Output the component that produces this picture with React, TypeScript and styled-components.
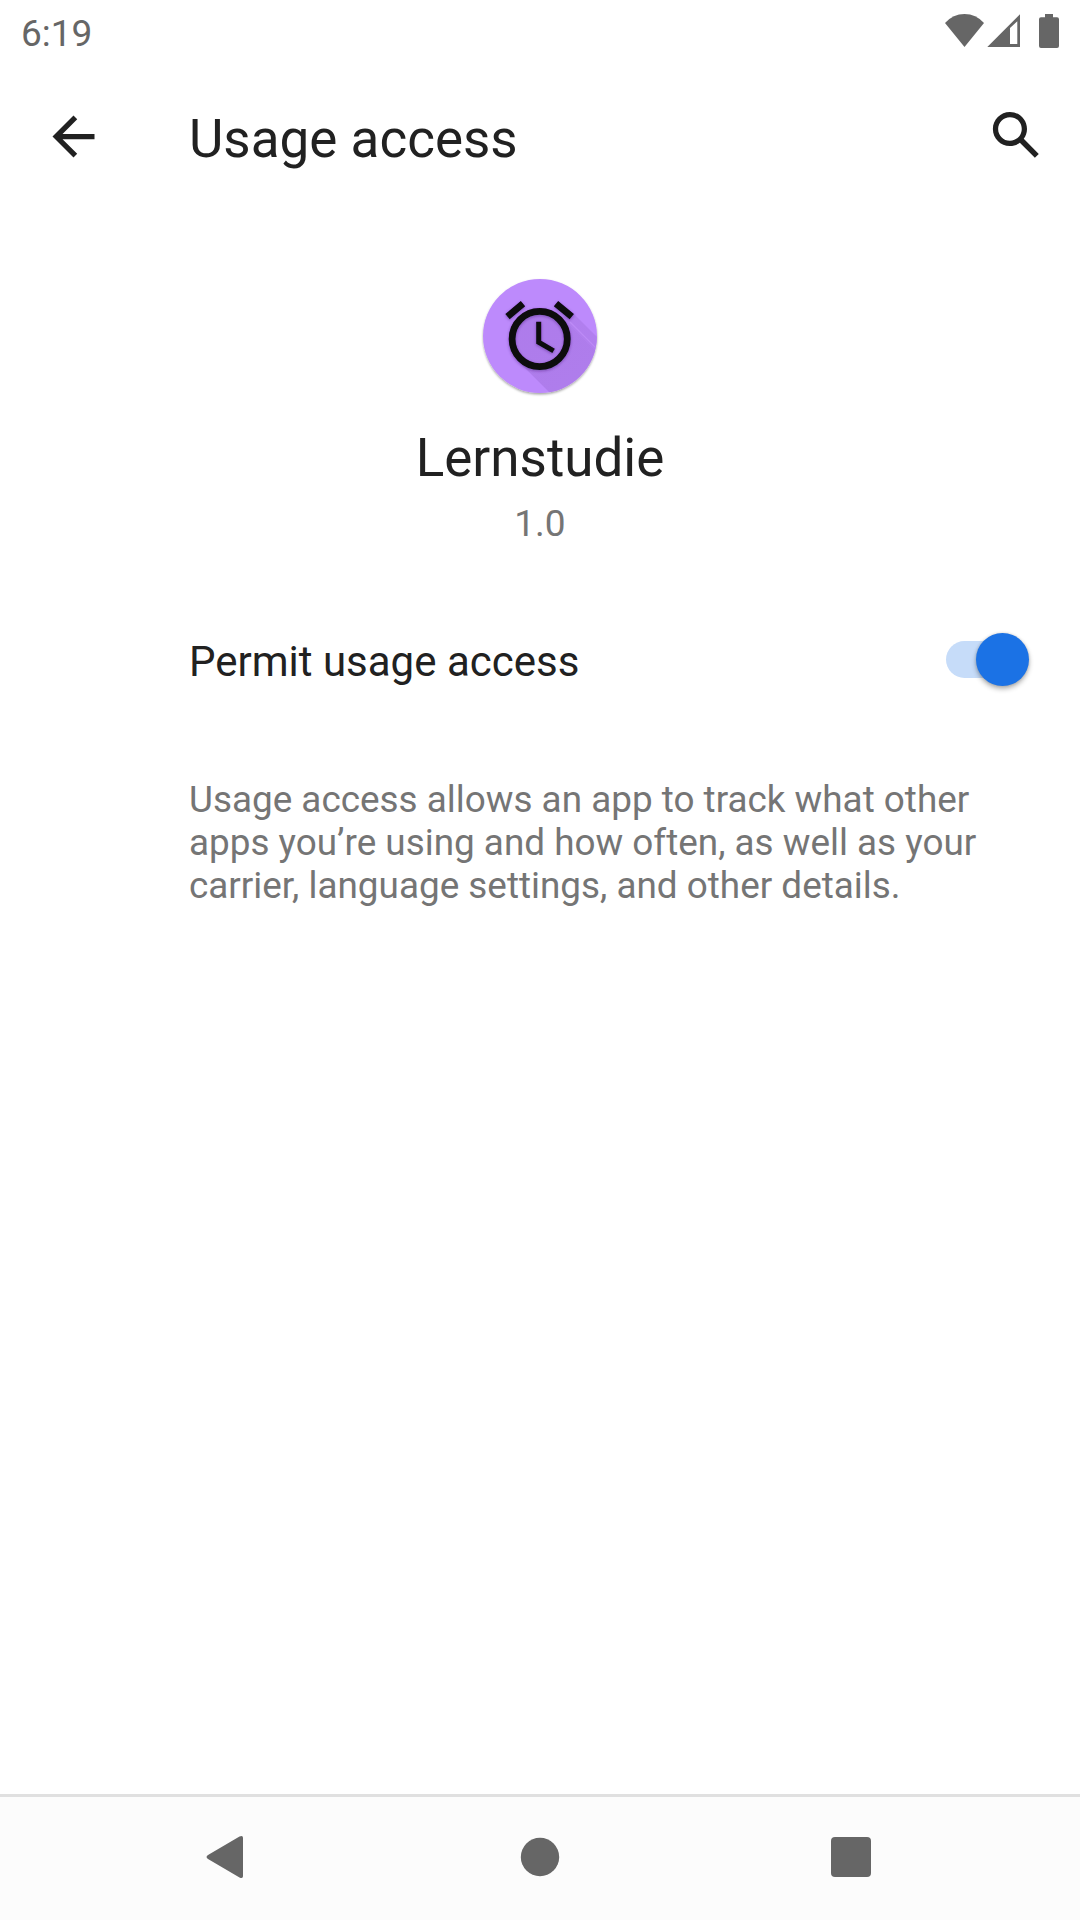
import React from "react";
import styled, { createGlobalStyle } from "styled-components";

const GlobalStyle = createGlobalStyle`
  *, *::before, *::after { box-sizing: border-box; }
  body { margin: 0; background: #ffffff; }
  svg { display: block; flex: none; }
`;

const Screen = styled.div`
  display: flex;
  flex-direction: column;
  width: 1080px;
  height: 1920px;
  background: #ffffff;
  color: #212121;
  font-family: Roboto, "Noto Sans", sans-serif;
  font-weight: 400;
  overflow: hidden;
`;

const StatusBar = styled.header`
  display: flex;
  align-items: center;
  justify-content: space-between;
  height: 62px;
  margin-bottom: 1px;
  padding: 0 18px 0 21px;
`;

const Clock = styled.span`
  margin-top: 5px;
  font-size: 37px;
  line-height: 43px;
  color: #666666;
`;

const AppBar = styled.div`
  display: flex;
  align-items: center;
  height: 147px;
  padding: 0 32px 0 42px;
`;

const IconButton = styled.button<{ $lift?: number }>`
  display: flex;
  width: 63px;
  height: 63px;
  margin-bottom: ${({ $lift = 0 }) => $lift * 2}px;
  padding: 0;
  border: 0;
  background: none;
  color: #212121;
`;

const Title = styled.h1`
  flex: 1;
  margin: 4px 0 0 84px;
  font-size: 53px;
  font-weight: 400;
  line-height: 62px;
`;

const Content = styled.main`
  flex: 1;
  display: flex;
  flex-direction: column;
`;

const EntityHeader = styled.section`
  display: flex;
  flex-direction: column;
  align-items: center;
  padding-top: 63px;
`;

const AppName = styled.h2`
  margin: 28px 0 0;
  font-size: 53px;
  font-weight: 400;
  line-height: 62px;
`;

const Version = styled.span`
  margin-top: 13px;
  font-size: 37px;
  line-height: 43px;
  color: #757575;
`;

const PreferenceRow = styled.div`
  display: flex;
  align-items: center;
  justify-content: space-between;
  height: 147px;
  margin-top: 41px;
  padding: 0 51px 0 189px;
`;

const PreferenceTitle = styled.span`
  margin-top: 4px;
  font-size: 42px;
  line-height: 50px;
`;

const SwitchTrack = styled.button`
  display: flex;
  align-items: center;
  justify-content: flex-end;
  width: 75px;
  height: 37px;
  margin-right: 8px;
  padding: 0;
  border: 0;
  border-radius: 19px;
  background: #c6dcf9;
`;

const SwitchThumb = styled.span`
  flex: none;
  width: 53px;
  height: 53px;
  margin-right: -8px;
  border-radius: 50%;
  background: #1b72e5;
  box-shadow: 0 3px 5px rgba(0, 0, 0, 0.3), 0 0 3px rgba(0, 0, 0, 0.15);
`;

const Description = styled.p`
  width: 812px;
  margin: 45px 0 0 189px;
  font-size: 36.87px;
  line-height: 43px;
  color: #757575;
`;

const NavigationBar = styled.nav`
  display: flex;
  justify-content: space-between;
  height: 126px;
  padding: 0 187px;
  border-top: 3px solid #e0e0e0;
  background: #fcfcfc;
`;

const NavButton = styled.button`
  display: flex;
  align-items: center;
  justify-content: center;
  width: 84px;
  height: 120px;
  padding: 0;
  border: 0;
  background: none;
`;

function StatusIcons() {
  return (
    <svg width="120" height="36" viewBox="942 13 120 36" fill="#666666">
      <path d="M964.5 47 L945 23 Q953 14 964.5 14 Q976 14 984 23 Z" />
      <path fillRule="evenodd" d="M987.3 47 L1020 14.3 V47 Z M1010 28 V44 H1017.3 V21.3 Z" />
      <path d="M1045 14h8v3.3h4q2 0 2 2V46q0 2-2 2h-16q-2 0-2-2V19.3q0-2 2-2h4z" />
    </svg>
  );
}

function BackIcon() {
  return (
    <svg width="63" height="63" viewBox="0 0 24 24" fill="currentColor">
      <path d="M20 11H7.83l5.59-5.59L12 4l-8 8 8 8 1.41-1.41L7.83 13H20v-2z" />
    </svg>
  );
}

function SearchIcon() {
  return (
    <svg width="63" height="63" viewBox="0 0 24 24" fill="currentColor">
      <path d="M20.49 19l-5.73-5.73C15.53 12.2 16 10.91 16 9.5 16 5.91 13.09 3 9.5 3S3 5.91 3 9.5 5.91 16 9.5 16c1.41 0 2.7-.47 3.77-1.24L19 20.49 20.49 19zM5 9.5C5 7.01 7.01 5 9.5 5S14 7.01 14 9.5 11.99 14 9.5 14 5 11.99 5 9.5z" />
    </svg>
  );
}

function AlarmAppIcon() {
  return (
    <svg width="126" height="126" viewBox="477 273 126 126">
      <defs>
        <clipPath id="disc"><circle cx="540" cy="336" r="57" /></clipPath>
        <linearGradient id="longShadow" x1="0" y1="0" x2="1" y2="1">
          <stop offset="0" stopColor="#9866d2" stopOpacity="0.4" />
          <stop offset="1" stopColor="#a878e4" stopOpacity="0.6" />
        </linearGradient>
        <filter id="discShadow" x="-20%" y="-20%" width="140%" height="140%">
          <feDropShadow dx="0" dy="1.5" stdDeviation="1.1" floodColor="#000" floodOpacity="0.36" />
        </filter>
        <filter id="glyphShadow" x="-20%" y="-20%" width="140%" height="140%">
          <feDropShadow dx="0" dy="1" stdDeviation="1.5" floodColor="#3b1d68" floodOpacity="0.45" />
        </filter>
      </defs>
      <circle cx="540" cy="336" r="57" fill="#bd8afc" filter="url(#discShadow)" />
      <g clipPath="url(#disc)">
        <path d="M518 361 A31 31 0 0 1 562 317 L640 395 L552 395 Z" fill="url(#longShadow)" />
        <path d="M562 317 L574 314 L630 370 L615 370 Z" fill="url(#longShadow)" opacity="0.8" />
        <path d="M570 322 L606 358" stroke="#bd8bf6" strokeWidth="1.2" />
      </g>
      <g fill="none" stroke="#080808" filter="url(#glyphShadow)">
        <circle cx="539.7" cy="339" r="27.6" strokeWidth="6.8" />
        <path d="M538.7 321.8 V342.2 L553.6 350.8" strokeWidth="5" />
        <path d="M507.5 316.7 L523 303.7 M556 303.7 L571.8 316.7" strokeWidth="6.8" />
      </g>
    </svg>
  );
}

export default function App() {
  return (
    <>
      <GlobalStyle />
      <Screen>
        <StatusBar>
          <Clock>6:19</Clock>
          <StatusIcons />
        </StatusBar>
        <AppBar>
          <IconButton aria-label="Navigate up"><BackIcon /></IconButton>
          <Title>Usage access</Title>
          <IconButton aria-label="Search" $lift={1}><SearchIcon /></IconButton>
        </AppBar>
        <Content>
          <EntityHeader>
            <AlarmAppIcon />
            <AppName>Lernstudie</AppName>
            <Version>1.0</Version>
          </EntityHeader>
          <PreferenceRow>
            <PreferenceTitle>Permit usage access</PreferenceTitle>
            <SwitchTrack role="switch" aria-checked="true" aria-label="Permit usage access">
              <SwitchThumb />
            </SwitchTrack>
          </PreferenceRow>
          <Description>
            Usage access allows an app to track what other apps you’re using and how often, as well as your
            carrier, language settings, and other details.
          </Description>
        </Content>
        <NavigationBar>
          <NavButton aria-label="Back">
            <svg width="46" height="44" viewBox="0 0 46 44">
              <path d="M33.5 1.5 Q37.3 -0.3 37 3.5 V40.5 Q37.3 44.3 33.5 42.5 L2 24 Q-0.9 22 2 20 Z" fill="#666666" />
            </svg>
          </NavButton>
          <NavButton aria-label="Home">
            <svg width="40" height="40" viewBox="0 0 40 40"><circle cx="20" cy="20" r="19.2" fill="#666666" /></svg>
          </NavButton>
          <NavButton aria-label="Overview">
            <svg width="40" height="40" viewBox="0 0 40 40"><rect width="40" height="40" rx="4" fill="#666666" /></svg>
          </NavButton>
        </NavigationBar>
      </Screen>
    </>
  );
}
